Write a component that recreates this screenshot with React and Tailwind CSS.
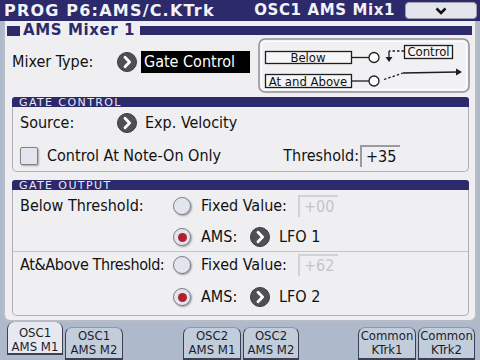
import React from "react";

const F = "font-['DejaVu_Sans_Condensed','DejaVu_Sans',sans-serif]";

const Go = () => (
  <svg width="20" height="20" viewBox="0 0 20 20" className="shrink-0">
    <circle cx="10" cy="10" r="9.5" fill="#4f4f54" />
    <circle cx="10" cy="10" r="9.5" fill="none" stroke="#3a3a3e" strokeWidth="1" />
    <path d="M8 5.3 L12.6 10 L8 14.7" stroke="#ffffff" strokeWidth="2.8" fill="none" strokeLinecap="round" strokeLinejoin="round" />
  </svg>
);

const Radio = ({ on }) => (
  <span className="w-[18px] h-[18px] shrink-0 rounded-full border border-[#80828c] bg-[#e2e5ee] shadow-[1px_1px_2px_rgba(0,0,0,0.35)] flex items-center justify-center">
    {on && <span className="w-[9px] h-[9px] rounded-full bg-[#b21f2b]" />}
  </span>
);

const SectionHead = ({ children }) => (
  <div className="h-[10px] bg-[#2c2a6a] rounded-t-[3px] flex items-center pl-[7px] text-[11px] leading-none text-[#e8e8f6] tracking-[1.4px] font-['DejaVu_Sans',sans-serif]">
    {children}
  </div>
);

const Tab = ({ a, b, active, className = "" }) => (
  <div
    className={
      "h-full rounded-t-[7px] flex flex-col items-center justify-center leading-[14px] text-[13px] text-[#1c1c2c] border-x border-b-2 border-[#3d3f52] " +
      (active ? "bg-[#e6e9f0] border-t-0 -mt-[5px] pt-[5px]" : "bg-[#c2cddb] border-t border-t-[#8d98ab]") +
      " " +
      className
    }
  >
    <span>{a}</span>
    <span>{b}</span>
  </div>
);

const Diagram = () => (
  <svg width="213" height="56" viewBox="0 0 213 56" className="shrink-0" style={{ fontFamily: "'DejaVu Sans Condensed','DejaVu Sans',sans-serif" }}>
    <rect x="1" y="1" width="210" height="53" rx="6" fill="#f1f1f3" stroke="#8f8f95" strokeWidth="1.5" />
    <rect x="3.5" y="3.5" width="205" height="48" rx="4" fill="none" stroke="#ffffff" strokeWidth="1" />
    <rect x="7.5" y="13.5" width="86" height="12" fill="#f6f6f6" stroke="#1e1e1e" strokeWidth="1.3" />
    <text x="50" y="23.5" textAnchor="middle" fontSize="13" fill="#111">Below</text>
    <rect x="7.5" y="36.5" width="86" height="13" fill="#f6f6f6" stroke="#1e1e1e" strokeWidth="1.3" />
    <text x="50" y="47.5" textAnchor="middle" fontSize="13" fill="#111">At and Above</text>
    <line x1="94" y1="19.5" x2="111" y2="19.5" stroke="#1e1e1e" strokeWidth="1.3" />
    <circle cx="116" cy="19.5" r="5" fill="#fff" stroke="#1e1e1e" strokeWidth="1.3" />
    <line x1="94" y1="43" x2="111" y2="43" stroke="#1e1e1e" strokeWidth="1.3" />
    <circle cx="116" cy="43" r="5" fill="#fff" stroke="#1e1e1e" strokeWidth="1.3" />
    <rect x="146.5" y="7.5" width="48" height="13" fill="#f6f6f6" stroke="#1e1e1e" strokeWidth="1.3" />
    <text x="170.5" y="18" textAnchor="middle" fontSize="13" fill="#111">Control</text>
    <line x1="146" y1="13" x2="131" y2="13" stroke="#1e1e1e" strokeWidth="1.3" strokeDasharray="2.5 2" />
    <line x1="131" y1="13" x2="131" y2="20" stroke="#1e1e1e" strokeWidth="1.3" />
    <path d="M127.5 19 L134.5 19 L131 24 Z" fill="#1e1e1e" />
    <line x1="126" y1="41.5" x2="145" y2="35" stroke="#1e1e1e" strokeWidth="1.3" strokeDasharray="2.5 2" />
    <line x1="145" y1="35" x2="199" y2="34" stroke="#1e1e1e" strokeWidth="1.3" />
    <path d="M198 30.5 L204 34 L198 37.5 Z" fill="#1e1e1e" />
  </svg>
);

const ValBox = ({ children, dim }) => (
  <div
    className={
      "w-[40px] h-[22px] border-t-2 border-l-2 pl-[4px] flex items-center text-[16px] " +
      (dim ? "border-[#d2d2d6] text-[#c4c4c8]" : "border-[#9a9aa0] text-[#111]")
    }
  >
    {children}
  </div>
);

export default function App() {
  return (
    <div className={"w-[480px] h-[360px] bg-[#aeb9cb] flex flex-col overflow-hidden text-[#111] " + F}>
      {/* header */}
      <div className="h-[21px] shrink-0 bg-[#2c2a6a] flex items-center pl-[4px] pr-[3px]">
        <span className="text-[16px] font-bold text-[#f2f2fa] tracking-[1.2px] font-['DejaVu_Sans',sans-serif] leading-none">
          PROG P6:AMS/C.KTrk
        </span>
        <span className="ml-auto text-[15px] font-bold text-[#f2f2fa] tracking-[0.6px] font-['DejaVu_Sans',sans-serif] leading-none">
          OSC1 AMS Mix1
        </span>
        <div className="ml-[10px] w-[72px] h-[17px] rounded-[4px] bg-[#e4e5ec] border border-[#9fa0b0] flex items-center justify-center">
          <svg width="12" height="8" viewBox="0 0 12 8">
            <path d="M1.5 1.5 L6 6 L10.5 1.5" stroke="#111" strokeWidth="2.6" fill="none" />
          </svg>
        </div>
      </div>

      {/* main panel */}
      <div className="h-[301px] shrink-0 mx-[3px] bg-[#efeff1] border-2 border-t-0 border-[#babcc5] rounded-b-[7px] flex flex-col">
        {/* title row */}
        <div className="h-[17px] flex items-center pl-[2px] pr-[3px] pt-[2px]">
          <span className="w-[13px] h-[10px] bg-[#2c2a6a]" />
          <span className="ml-[3px] text-[15px] font-bold text-[#2c2a6a] tracking-[0.6px] font-['DejaVu_Sans',sans-serif] leading-none">
            AMS Mixer 1
          </span>
          <span className="ml-[5px] flex-1 h-[9px] bg-[#2c2a6a]" />
        </div>

        {/* mixer type + diagram */}
        <div className="h-[55px] flex items-start">
          <div className="flex items-center pl-[7px] pt-[12px]">
            <span className="w-[105px] text-[16px]">Mixer Type:</span>
            <Go />
            <div className="ml-[4px] w-[109px] h-[22px] bg-black text-white text-[16px] pl-[3px] flex items-center">
              Gate Control
            </div>
          </div>
          <div className="ml-auto mr-[4px]">
            <Diagram />
          </div>
        </div>

        {/* gate control */}
        <div className="mt-[4px] ml-[7px] mr-[6px]">
          <SectionHead>GATE CONTROL</SectionHead>
          <div className="h-[65px] border border-t-0 border-[#aeaeb4] rounded-b-[5px] pt-[4px] px-[7px] flex flex-col text-[16px]">
            <div className="h-[24px] flex items-center">
              <span className="w-[97px]">Source:</span>
              <Go />
              <span className="ml-[8px]">Exp. Velocity</span>
            </div>
            <div className="h-[24px] mt-[9px] flex items-center">
              <span className="w-[18px] h-[18px] border border-[#7f828c] bg-[#e2e5ee] rounded-[2px] shadow-[1px_1px_2px_rgba(0,0,0,0.3)]" />
              <span className="ml-[9px]">Control At Note-On Only</span>
              <span className="ml-auto">Threshold:</span>
              <div className="ml-[1px] mr-[61px]">
                <ValBox>+35</ValBox>
              </div>
            </div>
          </div>
        </div>

        {/* gate output */}
        <div className="mt-[8px] ml-[7px] mr-[6px]">
          <SectionHead>GATE OUTPUT</SectionHead>
          <div className="h-[126px] border border-t-0 border-[#aeaeb4] rounded-b-[5px] flex flex-col text-[16px]">
            <div className="pt-[4px] pb-[2px] px-[7px] border-b border-[#c4c4c8]">
              <div className="h-[24px] flex items-center">
                <span className="w-[153px]">Below Threshold:</span>
                <Radio />
                <span className="ml-[10px] w-[97px]">Fixed Value:</span>
                <ValBox dim>+00</ValBox>
              </div>
              <div className="h-[24px] mt-[7px] flex items-center">
                <span className="w-[153px]" />
                <Radio on />
                <span className="ml-[10px] w-[49px]">AMS:</span>
                <Go />
                <span className="ml-[9px]">LFO 1</span>
              </div>
            </div>
            <div className="pt-[1px] px-[7px]">
              <div className="h-[24px] flex items-center">
                <span className="w-[153px] tracking-[-0.4px] whitespace-nowrap">At&amp;Above Threshold:</span>
                <Radio />
                <span className="ml-[10px] w-[97px]">Fixed Value:</span>
                <ValBox dim>+62</ValBox>
              </div>
              <div className="h-[24px] mt-[8px] flex items-center">
                <span className="w-[153px]" />
                <Radio on />
                <span className="ml-[10px] w-[49px]">AMS:</span>
                <Go />
                <span className="ml-[9px]">LFO 2</span>
              </div>
            </div>
          </div>
        </div>
      </div>

      {/* tabs */}
      <div className="flex-1 flex items-stretch pt-[5px] pl-[7px]">
        <Tab a="OSC1" b="AMS M1" active className="w-[56px]" />
        <Tab a="OSC1" b="AMS M2" className="w-[58px] ml-[2px]" />
        <Tab a="OSC2" b="AMS M1" className="w-[58px] ml-[60px]" />
        <Tab a="OSC2" b="AMS M2" className="w-[56px] ml-[2px]" />
        <Tab a="Common" b="KTrk1" className="w-[58px] ml-[59px]" />
        <Tab a="Common" b="KTrk2" className="w-[57px] ml-[2px]" />
      </div>
    </div>
  );
}
